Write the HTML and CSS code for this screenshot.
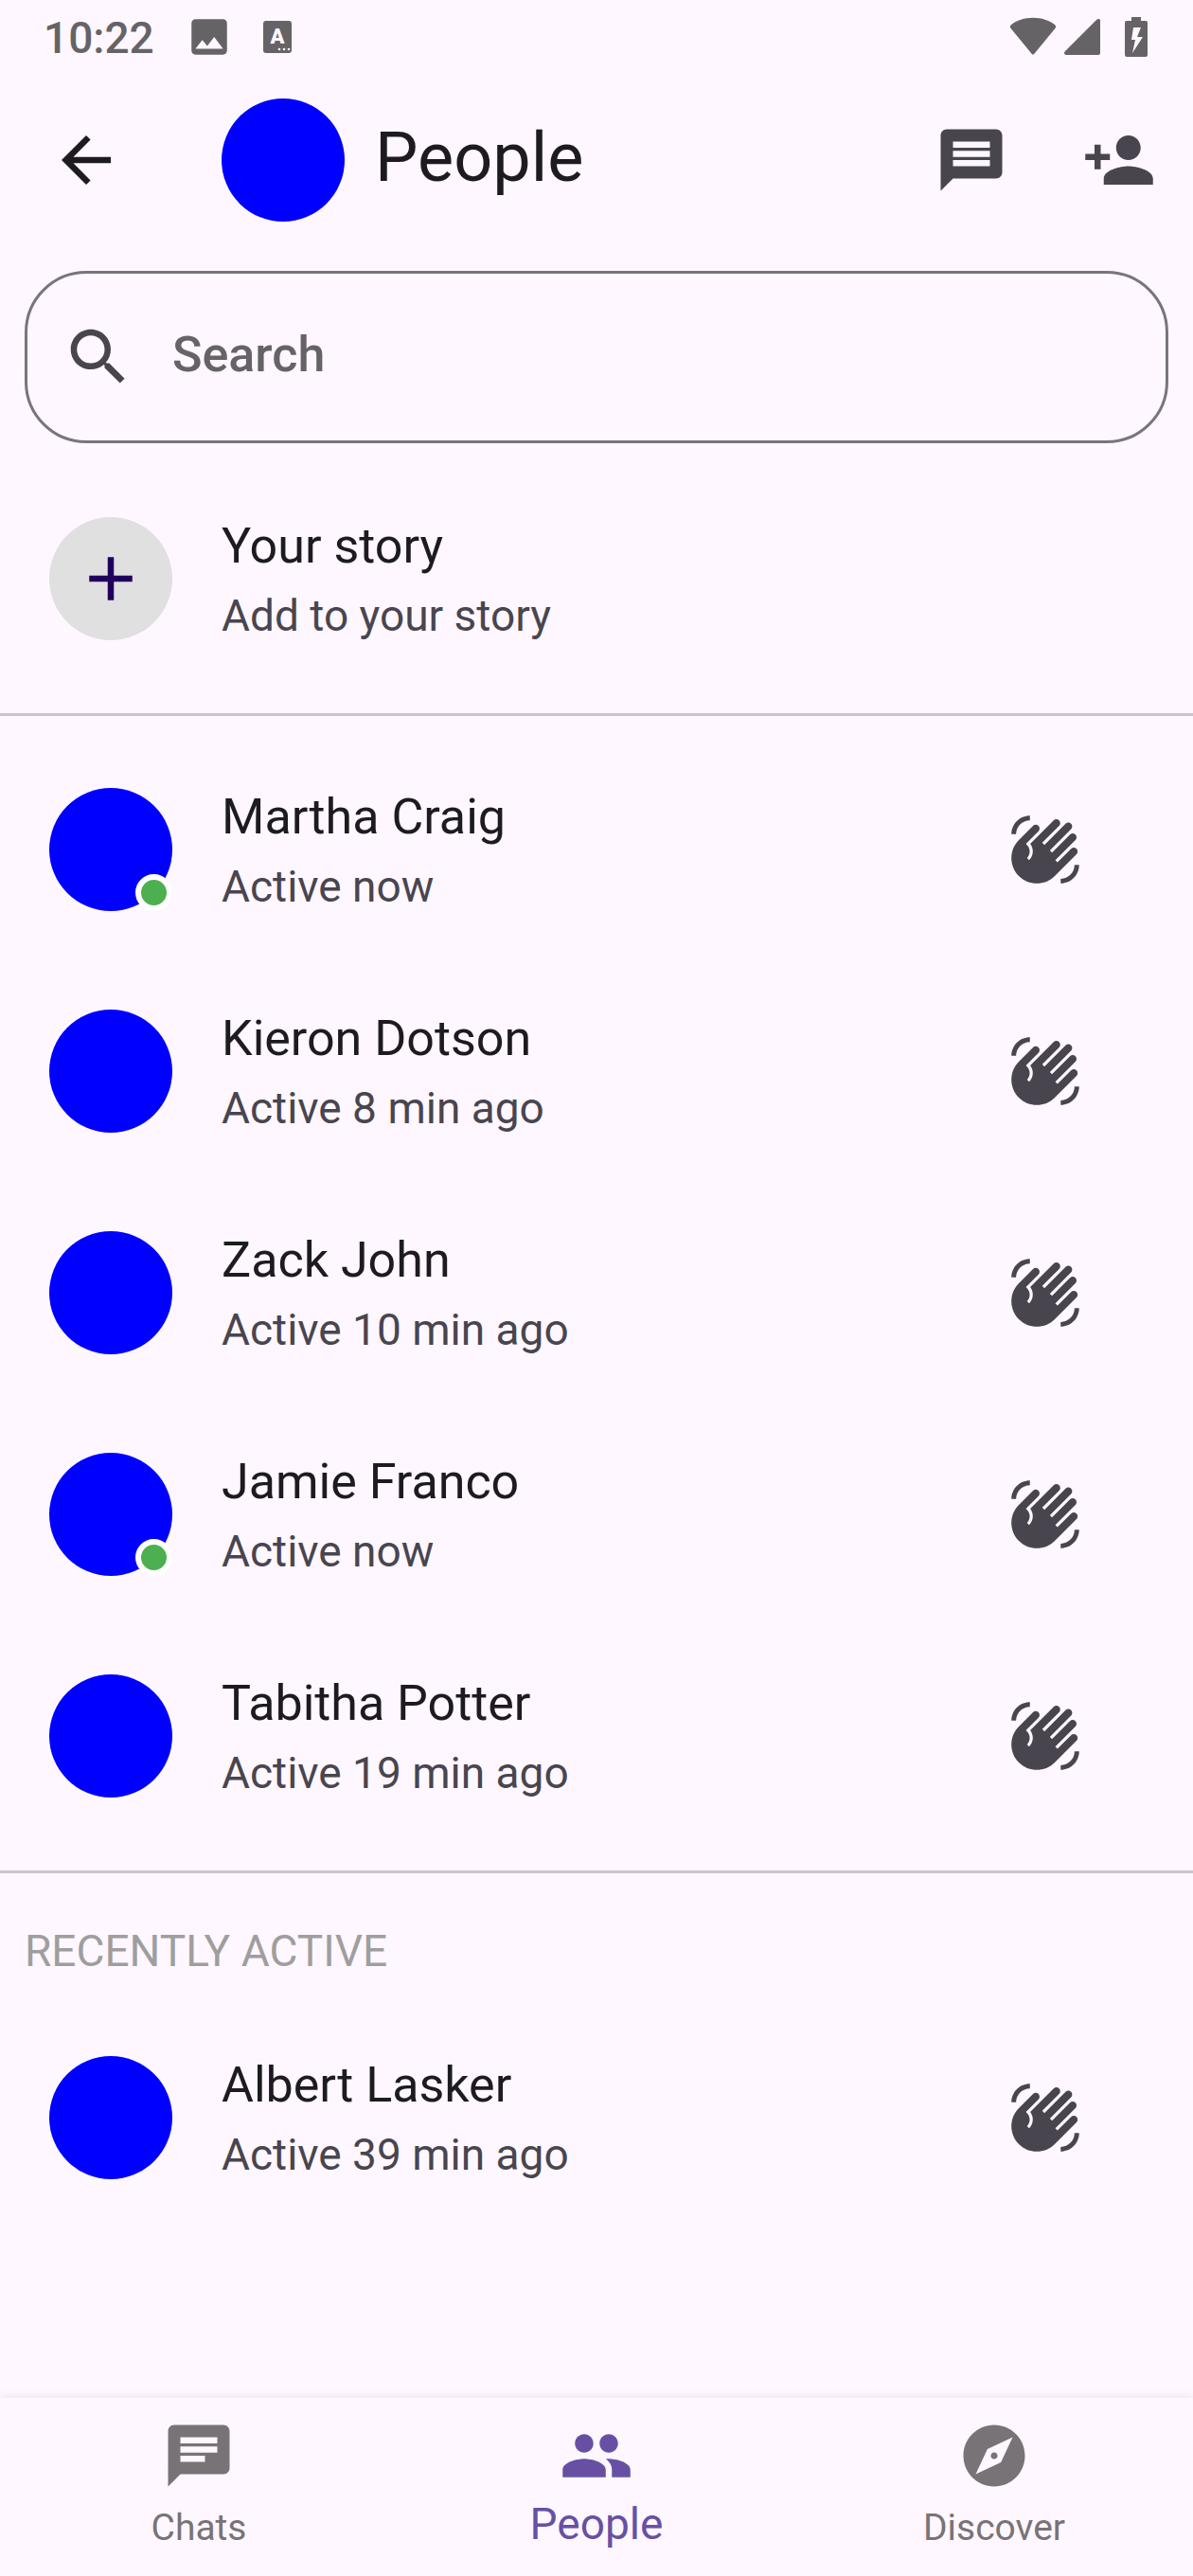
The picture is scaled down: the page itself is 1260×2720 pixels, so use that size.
FILE: index.html
```html
<!DOCTYPE html>
<html lang="en">
<head>
<meta charset="utf-8">
<meta name="viewport" content="width=device-width, initial-scale=1">
<title>People</title>
<link rel="stylesheet" href="styles.css">
</head>
<body>
<svg class="symbols" aria-hidden="true">
  <symbol id="wave" viewBox="0 0 24 24"><path d="M23 17c0 3.31-2.69 6-6 6v-1.5c2.48 0 4.5-2.02 4.5-4.5H23zM1 7c0-3.31 2.69-6 6-6v1.5C4.52 2.5 2.5 4.52 2.5 7H1zm7.01-2.68l-4.6 4.6c-3.22 3.22-3.22 8.45 0 11.67s8.45 3.22 11.67 0l7.07-7.07c.49-.49.49-1.28 0-1.77-.49-.49-1.28-.49-1.77 0l-4.42 4.42-.71-.71 6.54-6.54c.49-.49.49-1.28 0-1.77s-1.28-.49-1.77 0l-5.83 5.83-.71-.71 6.89-6.89c.49-.49.49-1.28 0-1.77s-1.28-.49-1.77 0l-6.89 6.89-.7-.7 5.48-5.48c.49-.49.49-1.28 0-1.77s-1.28-.49-1.77 0l-7.62 7.62c1.22 1.57 1.11 3.84-.33 5.28l-.71-.71c1.17-1.17 1.17-3.07 0-4.24l-.35-.35 4.07-4.07c.49-.49.49-1.28 0-1.77-.5-.48-1.29-.48-1.77.01z"/></symbol>
</svg>
<div class="app">
  <div class="status">
    <span class="clock">10:22</span>
    <svg class="status-image" viewBox="0 0 24 24" aria-hidden="true"><path d="M21 19V5c0-1.1-.9-2-2-2H5c-1.1 0-2 .9-2 2v14c0 1.1.9 2 2 2h14c1.1 0 2-.9 2-2zM8.500 13.500l2.500 3.010L14.500 12l4.500 6H5l3.500-4.500z"/></svg>
    <svg class="status-lang" viewBox="0 0 30 34" aria-hidden="true"><rect width="30" height="34" rx="3"/><text x="15" y="24" text-anchor="middle">A</text><circle cx="17" cy="30" r="1.300"/><circle cx="22" cy="30" r="1.300"/><circle cx="27" cy="30" r="1.300"/></svg>
    <span class="spacer"></span>
    <svg class="status-wifi" viewBox="0 0 50 42" aria-hidden="true"><path d="M1.200 11.500Q0 9.800 1.600 8.400C8 3.500 16 .8 25 .8s17 2.700 23.400 7.600q1.600 1.400.4 3.100L26.400 38.700q-1.400 1.800-2.800 0z"/></svg>
    <svg class="status-cell" viewBox="0 0 38 42" aria-hidden="true"><path d="M38 4v34q0 2-2 2H2q-2 0-2-2 0-1 1-2L34 3q1.500-1.500 3-1 1 .5 1 2z"/></svg>
    <svg class="status-battery" viewBox="0 0 24 42" aria-hidden="true"><path fill-rule="evenodd" d="M7 0h10v4h5q2 0 2 2v34q0 2-2 2H2q-2 0-2-2V6q0-2 2-2h5zM9 11L7 24h4L8 38l11-17h-6l4-10z"/></svg>
  </div>
  <header class="bar">
    <button class="back" type="button" aria-label="Back"><svg class="icon" viewBox="0 0 24 24"><path d="M20 11H7.830l5.590-5.590L12 4l-8 8 8 8 1.410-1.410L7.830 13H20v-2z"/></svg></button>
    <span class="avatar"></span>
    <h1 class="title">People</h1>
    <button class="action" type="button" aria-label="New message"><svg class="icon" viewBox="0 0 24 24"><path fill-rule="evenodd" d="M4 2h16c1.100 0 2 .9 2 2v12c0 1.100-.9 2-2 2H6l-4 4V4c0-1.100.9-2 2-2zM6 6v2h12V6zM6 9v2h12V9zM6 12v2h12v-2z"/></svg></button>
    <button class="action" type="button" aria-label="Add person"><svg class="icon" viewBox="0 0 24 24"><path d="M15 12c2.210 0 4-1.790 4-4s-1.790-4-4-4-4 1.790-4 4 1.790 4 4 4zm-9-2V7H4v3H1v2h3v3h2v-3h3v-2H6zm9 4c-2.670 0-8 1.340-8 4v2h16v-2c0-2.660-5.330-4-8-4z"/></svg></button>
  </header>
  <main class="content">
    <label class="search">
      <svg class="icon" viewBox="0 0 24 24" aria-hidden="true"><path d="M15.500 14h-.79l-.28-.27C15.410 12.590 16 11.110 16 9.500 16 5.910 13.090 3 9.500 3S3 5.910 3 9.500 5.910 16 9.500 16c1.610 0 3.090-.59 4.230-1.570l.27.28v.79l5 4.990L20.490 19l-4.990-5zm-6 0C7.010 14 5 11.990 5 9.500S7.010 5 9.500 5 14 7.010 14 9.500 11.990 14 9.500 14z"/></svg>
      <input class="field" type="text" placeholder="Search" aria-label="Search">
    </label>
    <a class="row" href="#story">
      <span class="avatar add"><svg class="icon" viewBox="0 0 24 24" aria-hidden="true"><path d="M19 13h-6v6h-2v-6H5v-2h6V5h2v6h6v2z"/></svg></span>
      <span class="info"><span class="name">Your story</span><span class="detail">Add to your story</span></span>
    </a>
    <hr class="divider">
    <ul class="list">
      <li class="row"><span class="avatar online"></span><span class="info"><span class="name">Martha Craig</span><span class="detail">Active now</span></span><button class="action" type="button" aria-label="Wave to Martha Craig"><svg class="icon"><use href="#wave"/></svg></button></li>
      <li class="row"><span class="avatar"></span><span class="info"><span class="name">Kieron Dotson</span><span class="detail">Active 8 min ago</span></span><button class="action" type="button" aria-label="Wave to Kieron Dotson"><svg class="icon"><use href="#wave"/></svg></button></li>
      <li class="row"><span class="avatar"></span><span class="info"><span class="name">Zack John</span><span class="detail">Active 10 min ago</span></span><button class="action" type="button" aria-label="Wave to Zack John"><svg class="icon"><use href="#wave"/></svg></button></li>
      <li class="row"><span class="avatar online"></span><span class="info"><span class="name">Jamie Franco</span><span class="detail">Active now</span></span><button class="action" type="button" aria-label="Wave to Jamie Franco"><svg class="icon"><use href="#wave"/></svg></button></li>
      <li class="row"><span class="avatar"></span><span class="info"><span class="name">Tabitha Potter</span><span class="detail">Active 19 min ago</span></span><button class="action" type="button" aria-label="Wave to Tabitha Potter"><svg class="icon"><use href="#wave"/></svg></button></li>
    </ul>
    <hr class="divider">
    <h2 class="heading">RECENTLY ACTIVE</h2>
    <ul class="list">
      <li class="row"><span class="avatar"></span><span class="info"><span class="name">Albert Lasker</span><span class="detail">Active 39 min ago</span></span><button class="action" type="button" aria-label="Wave to Albert Lasker"><svg class="icon"><use href="#wave"/></svg></button></li>
    </ul>
  </main>
  <nav class="tabs">
    <a class="tab" href="#chats"><svg class="icon" viewBox="0 0 24 24" aria-hidden="true"><path d="M20 2H4c-1.100 0-1.990.9-1.990 2L2 22l4-4h14c1.100 0 2-.9 2-2V4c0-1.100-.9-2-2-2zM6 9h12v2H6V9zm8 5H6v-2h8v2zm4-6H6V6h12v2z"/></svg>Chats</a>
    <a class="tab current" href="#people" aria-current="page"><svg class="icon" viewBox="0 0 24 24" aria-hidden="true"><path d="M16 11c1.660 0 2.990-1.340 2.990-3S17.660 5 16 5s-3 1.340-3 3 1.340 3 3 3zm-8 0c1.660 0 2.990-1.340 2.990-3S9.660 5 8 5 5 6.340 5 8s1.340 3 3 3zm0 2c-2.330 0-7 1.170-7 3.500V19h14v-2.500c0-2.330-4.670-3.500-7-3.500zm8 0c-.29 0-.62.020-.97.050 1.160.84 1.970 1.970 1.970 3.450V19h6v-2.500c0-2.330-4.670-3.500-7-3.500z"/></svg>People</a>
    <a class="tab" href="#discover"><svg class="icon" viewBox="0 0 24 24" aria-hidden="true"><path d="M12 10.900c-.61 0-1.100.49-1.100 1.100s.49 1.100 1.100 1.100 1.100-.49 1.100-1.100-.49-1.100-1.100-1.100zM12 2C6.480 2 2 6.480 2 12s4.480 10 10 10 10-4.480 10-10S17.520 2 12 2zm2.190 12.190L6 18l3.810-8.190L18 6l-3.810 8.190z"/></svg>Discover</a>
  </nav>
</div>
</body>
</html>
```

FILE: styles.css
```css
*, *::after { box-sizing: border-box; }

body {
  margin: 0;
  background: #fef7ff;
  color: #1d1b20;
  font-family: Roboto, "Liberation Sans", sans-serif;
}

button {
  padding: 0;
  border: 0;
  background: none;
  color: inherit;
}

a { color: inherit; text-decoration: none; }

svg { display: block; flex: none; fill: currentColor; }

.symbols { width: 0; height: 0; position: absolute; }

.app {
  display: flex;
  flex-direction: column;
  min-height: 100vh;
}

/* System status bar */
.status {
  display: flex;
  align-items: center;
  height: 78px;
  padding: 0 48px 0 46px;
  color: #666367;
}

.clock { font-size: 46px; font-weight: 500; line-height: 78px; padding-top: 2px; }
.spacer { flex: 1; }
.status-image { width: 50px; height: 50px; margin-left: 33px; }
.status-lang { width: 30px; height: 34px; margin-left: 32px; }
.status-lang text { font-size: 22px; font-weight: 900; }
.status-lang text, .status-lang circle { fill: #fef7ff; }
.status-wifi { width: 50px; height: 42px; margin-right: 8px; }
.status-cell { width: 38px; height: 42px; margin-right: 26px; }
.status-battery { width: 24px; height: 42px; }

/* App bar */
.bar { display: flex; align-items: center; height: 182px; }

.back {
  display: grid;
  place-items: center;
  width: 182px;
  height: 156px;
  margin-right: 52px;
}

.title {
  flex: 1;
  margin: 0 0 0 32px;
  padding-bottom: 4px;
  font-size: 72px;
  font-weight: 400;
  line-height: 92px;
}

.action {
  display: grid;
  place-items: center;
  flex: none;
  width: 156px;
  height: 156px;
  color: #49454f;
}

.icon { width: 78px; height: 78px; }

.avatar {
  position: relative;
  display: grid;
  place-items: center;
  flex: none;
  width: 130px;
  height: 130px;
  border-radius: 50%;
  background: #0000ff;
}

.avatar.add { background: #e0e0e0; color: #21005d; }

.avatar.online::after {
  content: "";
  position: absolute;
  right: 0;
  bottom: 0;
  width: 39px;
  height: 39px;
  border: 6px solid #ffffff;
  border-radius: 50%;
  background: #4caf50;
}

.content { flex: 1; }

.search {
  display: flex;
  align-items: center;
  gap: 39px;
  height: 182px;
  margin: 26px 26px;
  padding: 0 36px;
  border: 3px solid #79747e;
  border-radius: 65px;
  color: #49454f;
}

.field {
  flex: 1;
  min-width: 0;
  padding: 0 0 4px;
  border: 0;
  outline: 0;
  background: none;
  color: #1d1b20;
  font: 500 52px/78px Roboto, "Liberation Sans", sans-serif;
}

.field::placeholder { color: #666367; opacity: 1; }

.list { margin: 0; padding: 0; list-style: none; }

.row {
  display: flex;
  align-items: center;
  gap: 52px;
  height: 234px;
  padding: 0 78px 0 52px;
}

.info { display: flex; flex: 1; flex-direction: column; padding-top: 2px; }
.name { font-size: 52px; line-height: 76px; }
.detail { color: #49454f; font-size: 46px; line-height: 70px; }

.divider {
  height: 3px;
  margin: 25px 0 24px;
  border: 0;
  background: #cac4d0;
}

.heading {
  margin: 0;
  padding: 26px;
  color: #9e9e9e;
  font-size: 46px;
  font-weight: 400;
  line-height: 65px;
}

/* Bottom navigation */
.tabs {
  position: sticky;
  bottom: 0;
  display: grid;
  grid-template-columns: repeat(3, 1fr);
  height: 188px;
  padding-top: 22px;
  background: #fef7ff;
  box-shadow: 0 -2px 8px rgba(0, 0, 0, 0.07);
}

.tab {
  display: flex;
  flex-direction: column;
  align-items: center;
  color: #787377;
  font-size: 39px;
  line-height: 74px;
}

.tab.current { color: #6750a4; font-size: 46px; line-height: 66px; }
```
